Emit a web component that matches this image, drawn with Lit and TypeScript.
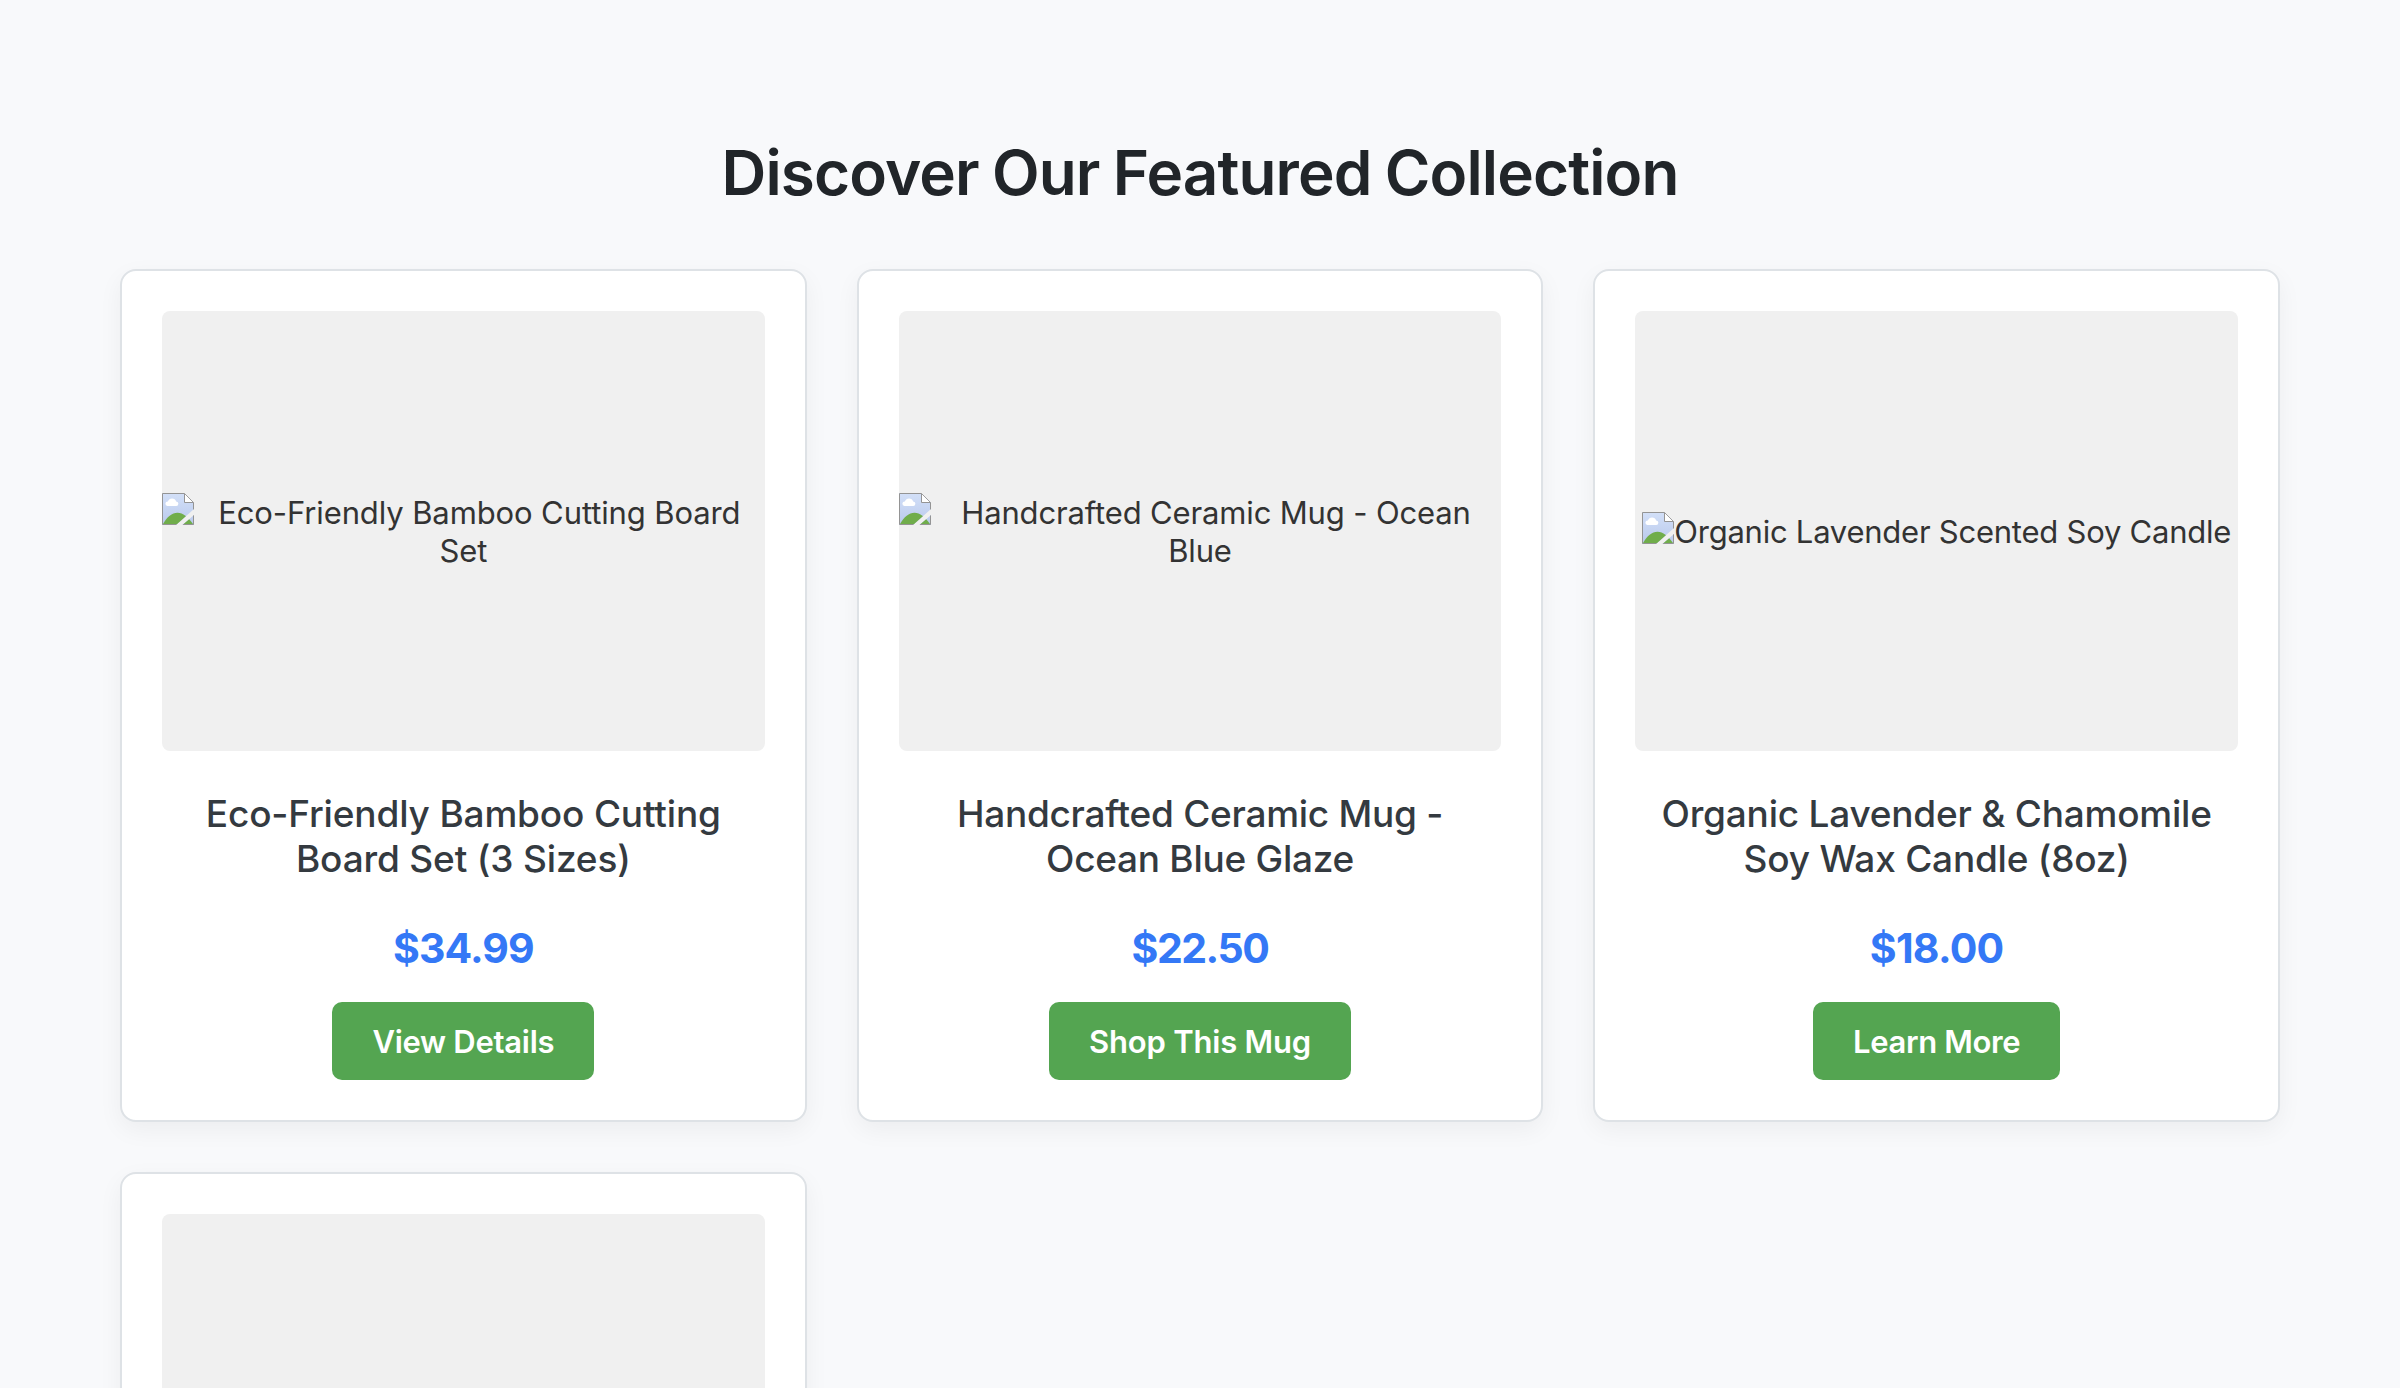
import { LitElement, html, css, svg } from "lit";
import { customElement, property } from "lit/decorators.js";
import { styleMap } from "lit/directives/style-map.js";

interface Product {
  alt: string;
  altTracking: number;
  title: string;
  titleTracking: number;
  price: string;
  priceTracking: number;
  action: string;
  actionWidth: number;
  actionTracking: number;
}

const products: Product[] = [
  {
    alt: "Eco-Friendly Bamboo Cutting Board Set", altTracking: -0.11,
    title: "Eco-Friendly Bamboo Cutting Board Set (3 Sizes)", titleTracking: -0.16,
    price: "$34.99", priceTracking: -0.89,
    action: "View Details", actionWidth: 262, actionTracking: -0.28,
  },
  {
    alt: "Handcrafted Ceramic Mug - Ocean Blue", altTracking: -0.15,
    title: "Handcrafted Ceramic Mug - Ocean Blue Glaze", titleTracking: -0.27,
    price: "$22.50", priceTracking: -1.47,
    action: "Shop This Mug", actionWidth: 302, actionTracking: -0.2,
  },
  {
    alt: "Organic Lavender Scented Soy Candle", altTracking: -0.24,
    title: "Organic Lavender & Chamomile Soy Wax Candle (8oz)", titleTracking: -0.22,
    price: "$18.00", priceTracking: -0.74,
    action: "Learn More", actionWidth: 247, actionTracking: -0.35,
  },
];

/** Missing-picture glyph: a torn page with a cloud and a hill. */
const brokenImage = svg`
  <defs>
    <linearGradient id="sky" x1="0" y1="0" x2="0" y2="1">
      <stop offset="0" stop-color="#d3e0f8"></stop>
      <stop offset="1" stop-color="#b9c9ec"></stop>
    </linearGradient>
    <clipPath id="torn">
      <path d="M0 0H22.5L32 9.5V16L14 32H0Z M32 22V32H20.500Z"></path>
    </clipPath>
  </defs>
  <g clip-path="url(#torn)">
    <path d="M0 0H22.5L32 9.5V32H0Z" fill="url(#sky)"></path>
    <path d="M5.500 13a2.300 2.300 0 0 1 .4-4.600 4.400 4.400 0 0 1 8.300 0 2.300 2.300 0 0 1 -.2 4.600Z" fill="#fff"></path>
    <path d="M1 31C5 24 10 19.800 15.500 19.800S26 24 31 31Z" fill="#70ad4b"></path>
    <path d="M22.500 .5V9.500H31.500Z" fill="#fff"></path>
    <path d="M.5 .5H22.500L31.500 9.500V31.500H.5ZM22.500 .5V9.500H31.500" fill="none" stroke="#949494"></path>
  </g>`;

@customElement("product-card")
class ProductCard extends LitElement {
  @property({ attribute: false }) product?: Product;

  static styles = css`
    :host {
      display: flex;
      flex-direction: column;
      align-items: center;
      box-sizing: border-box;
      height: 853px;
      padding: 40px;
      border: 2px solid #dee2e6;
      border-radius: 16px;
      background: #fff;
      box-shadow: 0 8px 24px rgba(0, 0, 0, 0.05);
      text-align: center;
    }
    .picture {
      display: flex;
      flex: none;
      align-items: center;
      justify-content: center;
      width: 100%;
      height: 440px;
      border-radius: 8px;
      background: #f0f0f0;
    }
    .alt {
      padding-top: 2px;
      font-size: 31px;
      line-height: 38px;
      color: #333;
    }
    .icon {
      float: left;
      display: block;
      width: 32px;
      height: 32px;
      margin-top: -1px;
    }
    .title {
      margin: 40px 0 0;
      font-size: 37px;
      font-weight: 500;
      line-height: 45.33px;
      color: #343a40;
    }
    .price {
      margin: 41.34px 0 0;
      font-size: 41px;
      font-weight: 700;
      line-height: 50px;
      color: #3478f6;
    }
    .action {
      box-sizing: border-box;
      height: 78px;
      margin-top: auto;
      padding-top: 1px;
      border-radius: 10px;
      background: #54a551;
      color: #fff;
      font-size: 31px;
      font-weight: 600;
      line-height: 77px;
      text-decoration: none;
    }
  `;

  render() {
    const p = this.product;
    if (!p) return html`<div class="picture"></div>`;
    const track = (v: number) => styleMap({ letterSpacing: `${v}px` });
    return html`
      <div class="picture">
        <div class="alt" style=${track(p.altTracking)}>
          <svg class="icon" viewBox="0 0 32 32">${brokenImage}</svg>${p.alt}
        </div>
      </div>
      <h3 class="title" style=${track(p.titleTracking)}>${p.title}</h3>
      <p class="price" style=${track(p.priceTracking)}>${p.price}</p>
      <a class="action" style=${styleMap({ width: `${p.actionWidth}px`, letterSpacing: `${p.actionTracking}px` })}>${p.action}</a>
    `;
  }
}

@customElement("app-root")
class AppRoot extends LitElement {
  static styles = css`
    :host {
      display: block;
      box-sizing: border-box;
      height: 1388px;
      overflow: hidden;
      padding: 135px 120px 0;
      background: #f8f9fb;
      font-family: Inter, "Liberation Sans", sans-serif;
    }
    .heading {
      margin: 0 0 58px;
      font-size: 62px;
      font-weight: 600;
      line-height: 76px;
      letter-spacing: -0.88px;
      word-spacing: -1.5px;
      text-align: center;
      color: #212529;
    }
    .grid {
      display: grid;
      grid-template-columns: repeat(3, minmax(0, 1fr));
      gap: 50px;
    }
  `;

  render() {
    return html`
      <h2 class="heading">Discover Our Featured Collection</h2>
      <div class="grid">
        ${products.map((p) => html`<product-card .product=${p}></product-card>`)}
        <product-card></product-card>
      </div>
    `;
  }
}
